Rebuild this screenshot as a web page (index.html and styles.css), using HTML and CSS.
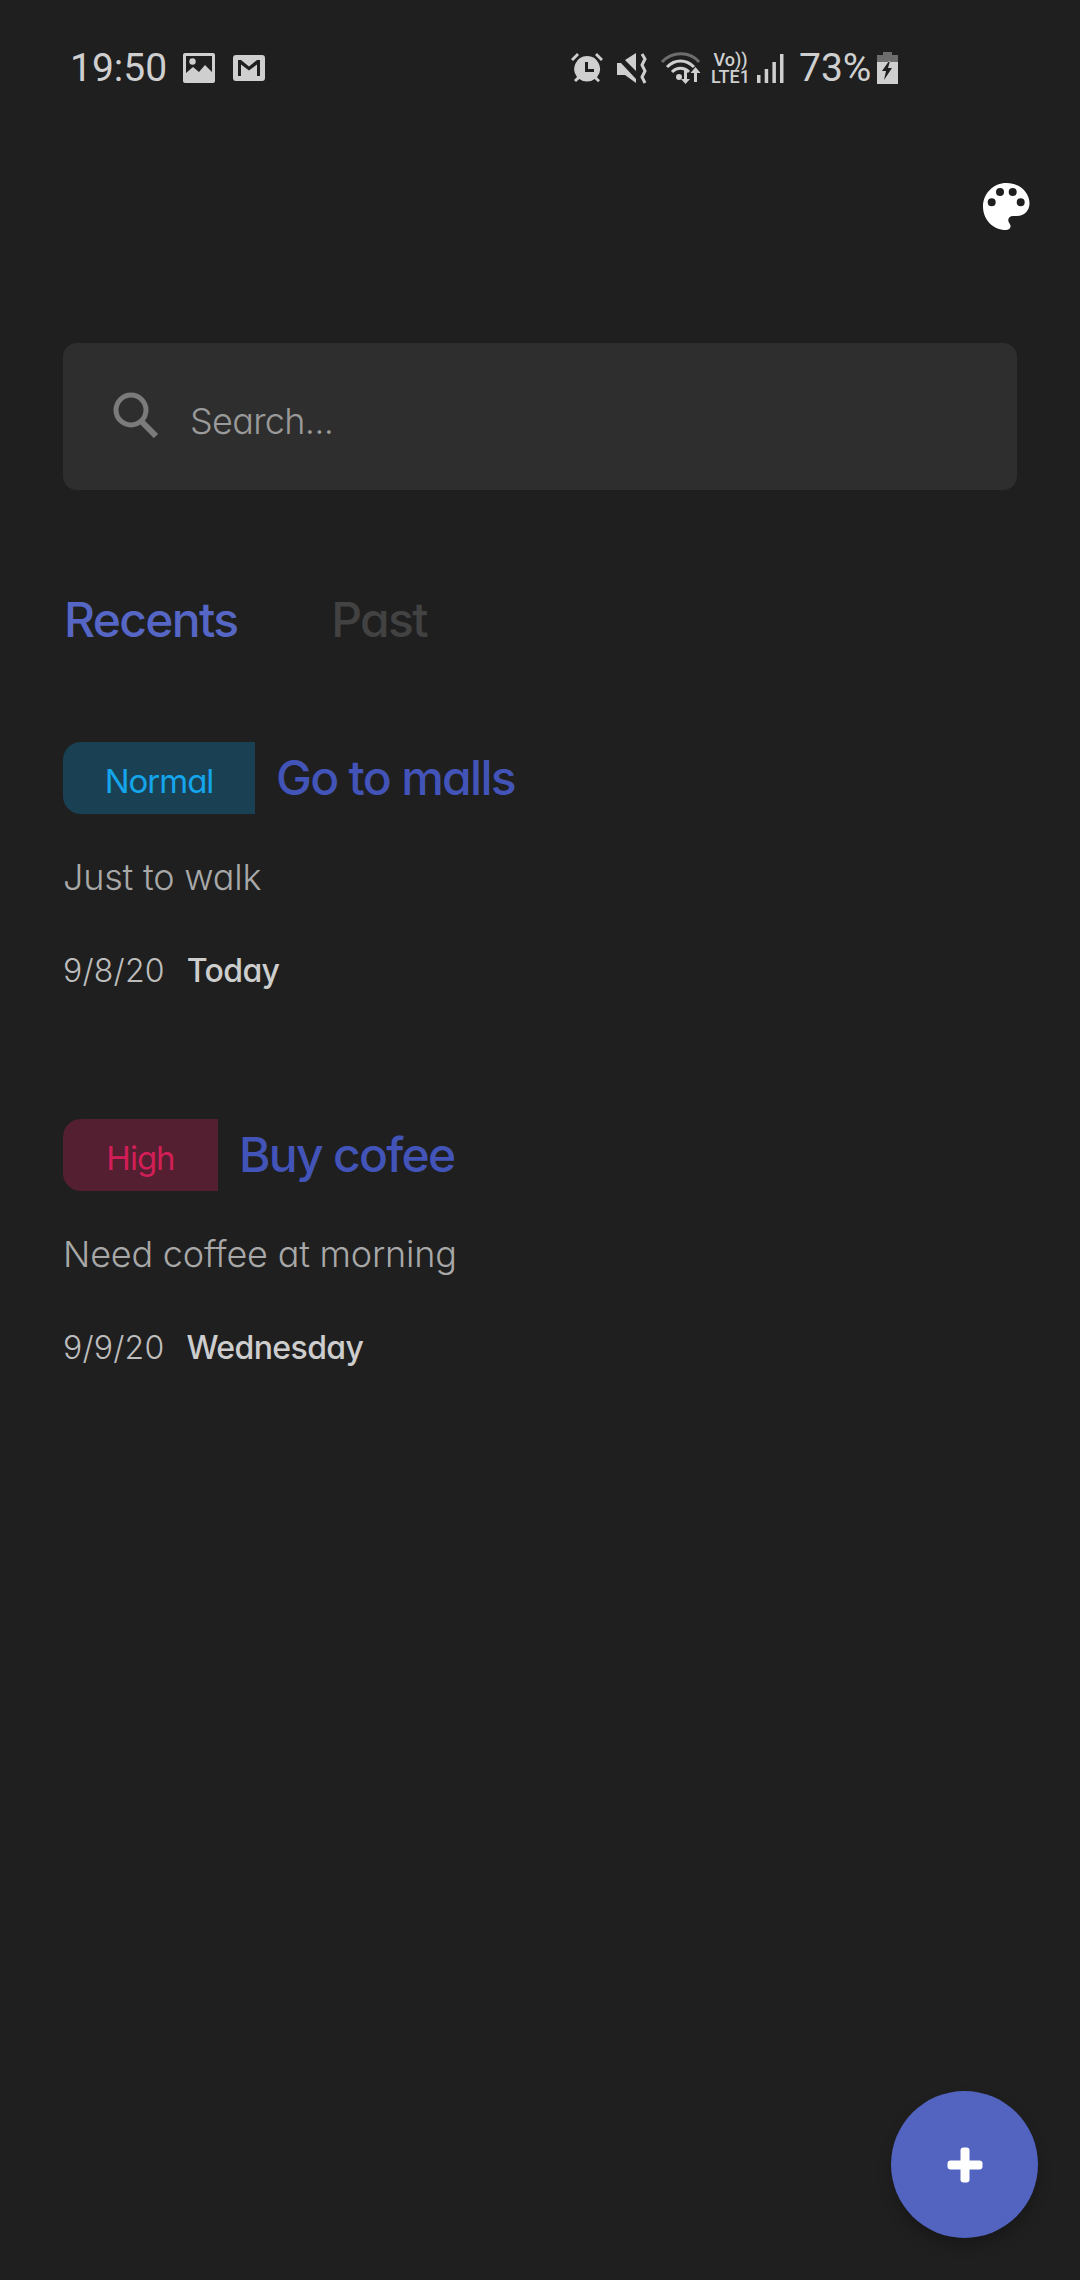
FILE: index.html
```html
<!DOCTYPE html>
<html lang="en">
<head>
<meta charset="utf-8">
<title>Tasks</title>
<link rel="stylesheet" href="styles.css">
</head>
<body>
<main class="screen">
  <header class="status">
    <div class="status-left">
      <span class="clock">19:50</span>
      <svg class="ic-image" viewBox="0 0 32 30"><path fill-rule="evenodd" d="M2 0h28a2 2 0 0 1 2 2v26a2 2 0 0 1-2 2H2a2 2 0 0 1-2-2V2a2 2 0 0 1 2-2zM3 3v17l7-6 6 5 6-7 7 7V3z"/><circle cx="9.500" cy="8.500" r="3.200"/></svg>
      <svg class="ic-mail" viewBox="0 0 32 26"><path fill-rule="evenodd" d="M3 0h26a3 3 0 0 1 3 3v20a3 3 0 0 1-3 3H3a3 3 0 0 1-3-3V3a3 3 0 0 1 3-3zM5 5v16h3V9.500l8 6 8-6V21h3V5h-3l-8 6.500L8 5z"/></svg>
    </div>
    <div class="status-right">
      <svg class="ic-alarm" viewBox="0 0 32 32"><path d="M0 7l6-6 2 2-6 6zM32 7l-6-6-2 2 6 6z"/><path fill-rule="evenodd" d="M16 4a13 13 0 0 1 10 21.300l3 3-2 2-3.300-3.300a13 13 0 0 1-15.400 0L5 30l-2-2 3-3A13 13 0 0 1 16 4zm-2 6v10h9v-3h-6v-7z"/></svg>
      <svg class="ic-mute" viewBox="0 0 32 32"><path d="M9 8l11-7v18zM1 11h4l15 16v4L9 23H1z"/><path class="wave" d="M26 2l3 5-3 6 3 6-3 6 3 6"/></svg>
      <svg class="ic-wifi" viewBox="0 0 42 32"><g fill="none" stroke-width="3"><path class="dim" d="M1 10C11-1 29-1 38 10"/><path d="M6 15c8-8 19-8 27 0M11 20c5-5 12-5 17 0"/></g><circle cx="18" cy="25" r="3"/><path d="M23 18h3v9h3l-4.500 5-4.500-5h3zM33 30h3v-9h3.500L34.500 15l-5 6H33z"/></svg>
      <div class="volte"><span>Vo))</span><span>LTE1</span></div>
      <svg class="ic-signal" viewBox="0 0 29 30"><rect x="0" y="22" width="3.500" height="8"/><rect x="7.700" y="16" width="3.500" height="14"/><rect x="15.400" y="9" width="3.500" height="21"/><rect x="23" y="1" width="3.500" height="29"/></svg>
      <span class="pct">73%</span>
      <svg class="ic-battery" viewBox="0 0 21 32"><rect class="dim-fill" x="6" y="0" width="9" height="4"/><rect class="dim-fill" x="0" y="3" width="21" height="7"/><path fill-rule="evenodd" d="M0 10h21v22H0zM12 9L5 19h4l-2 9 8-12h-4l2-7z"/></svg>
    </div>
  </header>

  <div class="toolbar">
    <svg class="palette" viewBox="0 0 47 47"><path fill-rule="evenodd" d="M23.500 0C36 0 46.500 9 46.500 20.500 46.500 27.500 41 33 34 33h-4c-3.500 0-5.500 3-4.500 5.500 1 2.500 2.500 3.500 2 5.500-.5 2-2.500 3-4.500 3C10 47 0 36.500 0 23.500S10.500 0 23.500 0zM8.700 15.300a4 4 0 1 0 0 8 4 4 0 0 0 0-8zM17 5a4 4 0 1 0 0 8 4 4 0 0 0 0-8zm12.700 0a4 4 0 1 0 0 8 4 4 0 0 0 0-8zm8 10.300a4 4 0 1 0 0 8 4 4 0 0 0 0-8z"/></svg>
  </div>

  <div class="search">
    <svg class="ic-search" viewBox="0 0 46 46"><circle cx="18" cy="18" r="15" fill="none" stroke-width="5"/><path d="M28 29l15 15" fill="none" stroke-width="6"/></svg>
    <span class="search-text">Search...</span>
  </div>

  <nav class="tabs">
    <span class="tab tab-on">Recents</span>
    <span class="tab">Past</span>
  </nav>

  <section class="list">
    <article class="task">
      <div class="task-head">
        <span class="pill pill-normal">Normal</span>
        <h2 class="title">Go to malls</h2>
      </div>
      <p class="desc">Just to walk</p>
      <p class="meta"><span class="date">9/8/20</span><span class="day">Today</span></p>
    </article>
    <article class="task">
      <div class="task-head">
        <span class="pill pill-high">High</span>
        <h2 class="title">Buy cofee</h2>
      </div>
      <p class="desc">Need coffee at morning</p>
      <p class="meta"><span class="date">9/9/20</span><span class="day">Wednesday</span></p>
    </article>
  </section>

  <button class="fab" type="button" aria-label="Add">
    <svg viewBox="0 0 36 36"><rect x="13.500" y="0.500" width="9" height="35" rx="3" fill="#fff"/><rect x="0.500" y="13.500" width="35" height="9" rx="3" fill="#fff"/></svg>
  </button>
</main>
</body>
</html>
```

FILE: styles.css
```css
* { box-sizing: border-box; }
html, body { margin: 0; padding: 0; background: #1f1f1f; }
.screen {
  position: relative;
  width: 1080px;
  height: 2280px;
  overflow: hidden;
  background: #1f1f1f;
  font-family: Inter, "Lato", sans-serif;
  font-feature-settings: "cv11" 1;
}

/* status bar */
.status {
  height: 136px;
  padding: 0 182px 0 70px;
  display: flex;
  justify-content: space-between;
  align-items: center;
  color: #cfcfcf;
  font-family: Roboto, sans-serif;
}
.status svg { fill: #cfcfcf; stroke: #cfcfcf; stroke-width: 0; display: block; flex: none; }
.status-left { display: flex; align-items: center; }
.clock { font-size: 39px; line-height: 46px; width: 113px; }
.ic-image { width: 32px; height: 30px; }
.ic-mail { width: 32px; height: 26px; margin-left: 18px; }
.status-right { display: flex; align-items: center; }
.ic-alarm { width: 32px; height: 32px; }
.ic-mute { width: 32px; height: 32px; margin-left: 13px; }
.status svg .wave { fill: none; stroke-width: 3; }
.ic-wifi { width: 42px; height: 32px; margin-left: 13px; }
.volte { display: flex; flex-direction: column; align-items: center; margin-left: 8px; width: 39px; font-size: 18px; line-height: 17px; font-weight: 500; }
.ic-signal { width: 29px; height: 30px; margin-left: 7px; }
.pct { font-size: 39px; line-height: 40px; margin-left: 13px; width: 71px; white-space: nowrap; }
.ic-battery { width: 21px; height: 32px; margin-left: 7px; }
.status svg .dim { stroke: #6d6d6d; }
.status svg .dim-fill { fill: #6d6d6d; }
.ic-wifi g { stroke: #cfcfcf; }

/* toolbar */
.toolbar { height: 207px; padding: 47px 50px 0 0; display: flex; justify-content: flex-end; align-items: flex-start; }
.palette { width: 47px; height: 47px; fill: #fff; display: block; }

/* search */
.search {
  width: 954px;
  height: 147px;
  margin-left: 63px;
  padding-left: 50px;
  display: flex;
  align-items: center;
  background: #2e2e2e;
  border-radius: 14px;
}
.ic-search { width: 46px; height: 46px; stroke: #7b7b7b; flex: none; margin-top: -4px; }
.search-text { margin-left: 31px; font-size: 36px; font-weight: 300; letter-spacing: -0.7px; color: #9a9a9a; line-height: 46px; margin-top: 8px; }

/* tabs */
.tabs { display: flex; gap: 94px; margin-top: 100px; padding-left: 64px; height: 60px; }
.tab { font-size: 48px; font-weight: 450; letter-spacing: -1.7px; line-height: 60px; color: #424242; }
.tab-on { color: #5566c4; }

/* task list */
.list { margin-top: 92px; display: flex; flex-direction: column; gap: 128px; }
.task { padding-left: 63px; }
.task-head { display: flex; align-items: center; gap: 21px; height: 72px; }
.pill {
  height: 72px;
  width: 192px;
  padding-top: 5px;
  justify-content: center;
  display: flex;
  align-items: center;
  font-size: 33px;
  letter-spacing: -1px;
  border-radius: 18px 0 0 18px;
}
.pill-high { width: 155px; }
.pill-normal { background: #1a4153; color: #14a5ec; }
.pill-high { background: #541f30; color: #d11e57; }
.title { margin: 0; font-size: 48px; font-weight: 450; letter-spacing: -1.7px; line-height: 60px; color: #4354b8; }
.desc { margin: 40px 0 0; font-size: 36px; letter-spacing: -0.2px; line-height: 46px; color: #a8a8a8; font-weight: 300; }
.meta { margin: 51px 0 0; display: flex; gap: 22px; font-size: 32px; line-height: 40px; color: #bdbdbd; }
.date { font-weight: 300; letter-spacing: 0.2px; }
.day { color: #cdcdcd; font-weight: 450; letter-spacing: -0.6px; }

/* floating action button */
.fab {
  position: absolute;
  left: 891px;
  top: 2091px;
  width: 147px;
  height: 147px;
  padding: 0;
  border: 0;
  border-radius: 50%;
  background: #5263c0;
  box-shadow: 0 8px 14px rgba(0, 0, 0, .22);
  display: flex;
  align-items: center;
  justify-content: center;
}
.fab svg { width: 36px; height: 36px; display: block; }
```
